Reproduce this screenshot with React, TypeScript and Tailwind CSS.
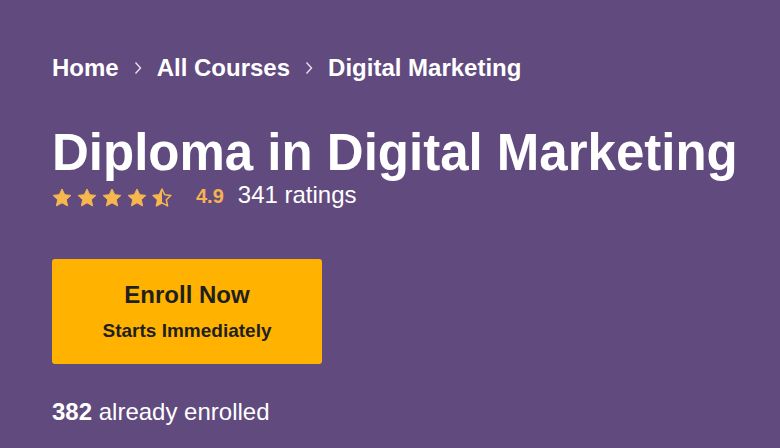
import React from "react";

function Star({ half = false }: { half?: boolean }) {
  const d = "M10 1L12.7 6.7 18.9 7.4 14.3 11.7 15.6 17.9 10 14.8 4.4 17.9 5.7 11.7 1.1 7.4 7.3 6.7Z";
  return (
    <svg width="20" height="19" viewBox="0 0 20 19">
      <defs>
        <clipPath id="halfclip">
          <rect x="0" y="0" width="10" height="19" />
        </clipPath>
      </defs>
      {half ? (
        <>
          <path d={d} fill="none" stroke="#f5b74e" strokeWidth="1.5" strokeLinejoin="round" />
          <path d={d} fill="#f5b74e" clipPath="url(#halfclip)" />
        </>
      ) : (
        <path d={d} fill="#f5b74e" stroke="#f5b74e" strokeWidth="1" strokeLinejoin="round" />
      )}
    </svg>
  );
}

function Chevron() {
  return (
    <svg width="10" height="14" viewBox="0 0 10 14" className="mx-[14px]">
      <path d="M2.5 1.5l5 5.5-5 5.5" fill="none" stroke="#e6e0ee" strokeWidth="1.4" />
    </svg>
  );
}

export default function App() {
  return (
    <div
      className="w-[780px] h-[448px] bg-[#614a7e] pl-[52px] pt-[56px] text-white overflow-hidden"
      style={{ fontFamily: '"Liberation Sans", Arial, sans-serif' }}
    >
      <nav className="flex items-center text-[24px] leading-none font-bold h-[24px]">
        <span>Home</span>
        <Chevron />
        <span>All Courses</span>
        <Chevron />
        <span>Digital Marketing</span>
      </nav>
      <h1 className="mt-[47px] text-[51px] leading-none font-bold">Diploma in Digital Marketing</h1>
      <div className="mt-[5px] flex items-center h-[24px]">
        <div className="flex gap-[5px] mt-[5px]">
          <Star />
          <Star />
          <Star />
          <Star />
          <Star half />
        </div>
        <span className="ml-[24px] text-[20px] font-bold text-[#f4b251] leading-none mt-[2px]">4.9</span>
        <span className="ml-[14px] text-[24px] leading-none">341 ratings</span>
      </div>
      <button className="mt-[52px] w-[270px] h-[105px] rounded-[3px] bg-[#ffb300] flex flex-col items-center justify-center text-[#1f1f1f] font-bold">
        <span className="text-[24px] leading-none">Enroll Now</span>
        <span className="mt-[14px] text-[19px] leading-none">Starts Immediately</span>
      </button>
      <p className="mt-[36px] text-[24px] leading-none">
        <span className="font-bold">382</span> already enrolled
      </p>
    </div>
  );
}
